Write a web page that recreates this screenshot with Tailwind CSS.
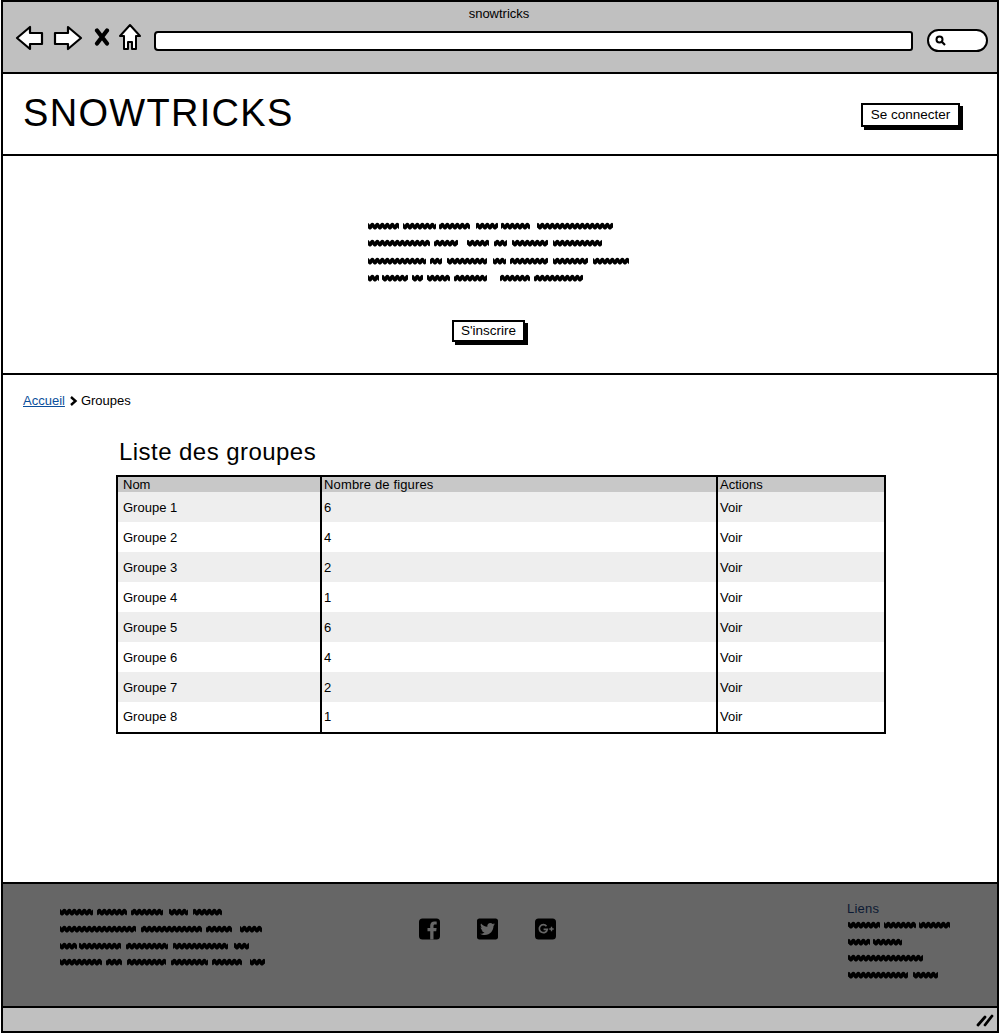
<!doctype html>
<html lang="fr">
<head>
<meta charset="utf-8">
<title>snowtricks</title>
<script src="https://cdn.jsdelivr.net/npm/@tailwindcss/browser@4"></script>
</head>
<body class="bg-white font-['Liberation_Sans',Arial,sans-serif] text-black">
<svg width="0" height="0" class="absolute">
  <defs>
    <pattern id="sq" width="5" height="8" patternUnits="userSpaceOnUse">
      <path d="M-5 4.5 C-4 2 -3.5 2 -2.5 4 S-1 6.5 0 4.5 C1 2 1.5 2 2.5 4 S4 6.5 5 4.5 C6 2 6.5 2 7.5 4" fill="none" stroke="#000" stroke-width="3.5"/>
    </pattern>
  </defs>
</svg>
<div class="ml-px w-[998px] h-[1033px] border-2 border-black flex flex-col overflow-hidden">
  <!-- browser chrome -->
  <div class="h-[72px] shrink-0 bg-[#c0c0c0] border-b-2 border-black flex flex-col">
    <div class="text-center text-[13px] leading-4 pt-[4px] pr-[2px]">snowtricks</div>
    <div class="flex items-center pl-[12px] mt-[1px]">
      <svg width="29" height="28" viewBox="0 0 29 28" class="shrink-0"><path d="M2 14 L15 3 L15 9 L27 9 L27 20 L15 20 L15 25 Z" fill="#fff" stroke="#000" stroke-width="2.2" stroke-linejoin="round"/></svg>
      <svg width="30" height="28" viewBox="0 0 30 28" class="ml-[9px] shrink-0"><path d="M2 9 L15 9 L15 3 L28 14 L15 25 L15 20 L2 20 Z" fill="#fff" stroke="#000" stroke-width="2.2" stroke-linejoin="round"/></svg>
      <svg width="16" height="18" viewBox="0 0 16 18" class="ml-[11px] -mt-[2px] shrink-0"><path d="M3 2.5 L13 15.5 M13 2.5 L3 15.5" stroke="#000" stroke-width="4.2" stroke-linecap="round"/></svg>
      <svg width="24" height="28" viewBox="0 0 24 28" class="ml-[8px] -mt-[1px] shrink-0"><path d="M12 2 L22 13 L18 13 L18 26 L14 26 L14 19 L10 19 L10 26 L6 26 L6 13 L2 13 Z" fill="#fff" stroke="#000" stroke-width="2" stroke-linejoin="round"/></svg>
      <div class="ml-[12px] mt-[6px] w-[759px] h-[20px] bg-white border-2 border-black rounded-l-[4px] rounded-r-[3px] shrink-0"></div>
      <div class="ml-[14px] mt-[6px] w-[61px] h-[23px] bg-white border-2 border-black rounded-[12px] shrink-0 flex items-center pl-[6px]">
        <svg width="11" height="11" viewBox="0 0 11 11"><circle cx="4.5" cy="4.5" r="3" fill="none" stroke="#000" stroke-width="2"/><path d="M6.8 6.8 L10 10" stroke="#000" stroke-width="2.2"/></svg>
      </div>
    </div>
  </div>
  <!-- header -->
  <div class="h-[82px] shrink-0 border-b-2 border-black flex items-center justify-between pl-[20px] pr-[37px]">
    <div class="text-[38px] leading-none tracking-[1.3px] -mt-[2px]">SNOWTRICKS</div>
    <div class="mt-[2px] w-[99px] h-[24px] bg-white border-2 border-black shadow-[3px_3px_0_#000] flex items-center justify-center text-[13.5px]">Se connecter</div>
  </div>
  <!-- hero -->
  <div class="h-[219px] shrink-0 border-b-2 border-black flex flex-col items-start pl-[363px] pt-[63px]">
    <svg width="266" height="66" viewBox="0 0 266 66" class="blur-[0.3px]">
      <g fill="url(#sq)">
        <g transform="translate(0,3)"><rect x="2" width="31" height="8" rx="2"/><rect x="37" width="33" height="8" rx="2"/><rect x="73" width="31" height="8" rx="2"/><rect x="110" width="22" height="8" rx="2"/><rect x="135" width="29" height="8" rx="2"/><rect x="171" width="76" height="8" rx="2"/></g>
        <g transform="translate(0,20)"><rect x="2" width="62" height="8" rx="2"/><rect x="68" width="24" height="8" rx="2"/><rect x="101" width="22" height="8" rx="2"/><rect x="128" width="13" height="8" rx="2"/><rect x="146" width="36" height="8" rx="2"/><rect x="187" width="49" height="8" rx="2"/></g>
        <g transform="translate(0,38)"><rect x="2" width="58" height="8" rx="2"/><rect x="64" width="12" height="8" rx="2"/><rect x="81" width="40" height="8" rx="2"/><rect x="127" width="13" height="8" rx="2"/><rect x="144" width="38" height="8" rx="2"/><rect x="187" width="35" height="8" rx="2"/><rect x="227" width="36" height="8" rx="2"/></g>
        <g transform="translate(0,55)"><rect x="2" width="11" height="8" rx="2"/><rect x="16" width="26" height="8" rx="2"/><rect x="46" width="11" height="8" rx="2"/><rect x="61" width="23" height="8" rx="2"/><rect x="88" width="33" height="8" rx="2"/><rect x="134" width="30" height="8" rx="2"/><rect x="168" width="49" height="8" rx="2"/></g>
      </g>
    </svg>
    <div class="ml-[86px] mt-[35px] w-[73px] h-[22px] bg-white border-2 border-black shadow-[3px_3px_0_#000] flex items-center justify-center text-[13.5px]">S'inscrire</div>
  </div>
  <!-- main -->
  <div class="h-[509px] shrink-0 flex flex-col pl-[20px]">
    <div class="flex items-center h-4 mt-[18px] text-[13px]">
      <span class="text-[#0b4f9c] underline">Accueil</span>
      <svg width="9" height="10" viewBox="0 0 9 10" class="ml-[4px] mr-[3px]"><path d="M2 1 L6.5 5 L2 9" fill="none" stroke="#000" stroke-width="2.4"/></svg>
      <span>Groupes</span>
    </div>
    <h1 class="ml-[96px] mt-[29px] text-[24px] leading-7 tracking-[0.45px]">Liste des groupes</h1>
    <table class="ml-[93px] mt-[9px] w-[770px] table-fixed border-collapse border-2 border-black text-[13px] leading-4">
      <colgroup><col class="w-[204px]"><col class="w-[396px]"><col></colgroup>
      <thead>
        <tr class="h-[16px] bg-[#c8c8c8] text-[13px] leading-[14px]">
          <th class="font-normal text-left pl-[5px] pt-[1px] border-r-2 border-black">Nom</th>
          <th class="font-normal text-left pl-[2px] pt-[1px] tracking-[0.15px] border-r-2 border-black">Nombre de figures</th>
          <th class="font-normal text-left pl-[2px] pt-[1px]">Actions</th>
        </tr>
      </thead>
      <tbody>
        <tr class="h-[30px] bg-[#eeeeee]"><td class="pl-[5px] pt-[2px] border-r-2 border-black">Groupe 1</td><td class="pl-[2px] pt-[2px] border-r-2 border-black">6</td><td class="pl-[2px] pt-[2px]">Voir</td></tr>
        <tr class="h-[30px] bg-white"><td class="pl-[5px] pt-[2px] border-r-2 border-black">Groupe 2</td><td class="pl-[2px] pt-[2px] border-r-2 border-black">4</td><td class="pl-[2px] pt-[2px]">Voir</td></tr>
        <tr class="h-[30px] bg-[#eeeeee]"><td class="pl-[5px] pt-[2px] border-r-2 border-black">Groupe 3</td><td class="pl-[2px] pt-[2px] border-r-2 border-black">2</td><td class="pl-[2px] pt-[2px]">Voir</td></tr>
        <tr class="h-[30px] bg-white"><td class="pl-[5px] pt-[2px] border-r-2 border-black">Groupe 4</td><td class="pl-[2px] pt-[2px] border-r-2 border-black">1</td><td class="pl-[2px] pt-[2px]">Voir</td></tr>
        <tr class="h-[30px] bg-[#eeeeee]"><td class="pl-[5px] pt-[2px] border-r-2 border-black">Groupe 5</td><td class="pl-[2px] pt-[2px] border-r-2 border-black">6</td><td class="pl-[2px] pt-[2px]">Voir</td></tr>
        <tr class="h-[30px] bg-white"><td class="pl-[5px] pt-[2px] border-r-2 border-black">Groupe 6</td><td class="pl-[2px] pt-[2px] border-r-2 border-black">4</td><td class="pl-[2px] pt-[2px]">Voir</td></tr>
        <tr class="h-[30px] bg-[#eeeeee]"><td class="pl-[5px] pt-[2px] border-r-2 border-black">Groupe 7</td><td class="pl-[2px] pt-[2px] border-r-2 border-black">2</td><td class="pl-[2px] pt-[2px]">Voir</td></tr>
        <tr class="h-[31px] bg-white"><td class="pl-[5px] border-r-2 border-black">Groupe 8</td><td class="pl-[2px] border-r-2 border-black">1</td><td class="pl-[2px]">Voir</td></tr>
      </tbody>
    </table>
  </div>
  <!-- footer -->
  <div class="h-[126px] shrink-0 bg-[#666666] border-t-2 border-b-2 border-black flex items-start -mt-[2px]">
    <svg width="210" height="62" viewBox="0 0 210 62" class="ml-[55px] mt-[23px] shrink-0 blur-[0.4px]">
      <g fill="url(#sq)">
        <g transform="translate(0,1)"><rect x="2" width="33" height="8" rx="2"/><rect x="39" width="30" height="8" rx="2"/><rect x="73" width="32" height="8" rx="2"/><rect x="111" width="19" height="8" rx="2"/><rect x="135" width="29" height="8" rx="2"/></g>
        <g transform="translate(0,18)"><rect x="2" width="76" height="8" rx="2"/><rect x="83" width="61" height="8" rx="2"/><rect x="148" width="26" height="8" rx="2"/><rect x="182" width="22" height="8" rx="2"/></g>
        <g transform="translate(0,35)"><rect x="2" width="17" height="8" rx="2"/><rect x="21" width="42" height="8" rx="2"/><rect x="68" width="42" height="8" rx="2"/><rect x="115" width="55" height="8" rx="2"/><rect x="176" width="15" height="8" rx="2"/></g>
        <g transform="translate(0,51)"><rect x="2" width="42" height="8" rx="2"/><rect x="48" width="16" height="8" rx="2"/><rect x="69" width="39" height="8" rx="2"/><rect x="113" width="37" height="8" rx="2"/><rect x="154" width="30" height="8" rx="2"/><rect x="192" width="15" height="8" rx="2"/></g>
      </g>
    </svg>
    <div class="ml-[151px] mt-[33px] flex gap-[37px] shrink-0">
      <svg width="21" height="24" viewBox="0 0 21 24"><rect x="0" y="1.5" width="21" height="21" rx="3.5" fill="#000"/><path d="M14.5 22.5 V14.3 h2.7 l.4-3.2 h-3.1 V9.1 c0-.9.3-1.5 1.6-1.5 h1.6 V4.7 c-.3 0-1.3-.1-2.4-.1 -2.4 0-4.1 1.5-4.1 4.2 V11.1 H8.5 v3.2 h2.7 v8.2 z" fill="#666"/></svg>
      <svg width="21" height="24" viewBox="0 0 448 512"><path d="M400 32H48C21.5 32 0 53.5 0 80v352c0 26.5 21.5 48 48 48h352c26.5 0 48-21.5 48-48V80c0-26.5-21.5-48-48-48zm-48.9 158.8c.2 2.8.2 5.7.2 8.5 0 86.7-66 186.6-186.6 186.6-37.2 0-71.7-10.8-100.7-29.4 5.3.6 10.4.8 15.8.8 30.7 0 58.9-10.4 81.4-28-28.8-.6-53-19.5-61.3-45.5 10.1 1.5 19.2 1.5 29.6-1.2-30-6.1-52.5-32.5-52.5-64.4v-.8c8.7 4.9 18.9 7.9 29.6 8.3a65.447 65.447 0 0 1-29.2-54.6c0-12.2 3.2-23.4 8.9-33.1 32.3 39.8 80.8 65.8 135.2 68.6-9.3-44.5 24-80.6 64-80.6 18.9 0 35.9 7.9 47.9 20.7 14.8-2.8 29-8.3 41.6-15.8-4.9 15.2-15.1 28-28.8 35.9 13.2-1.4 26-5.1 37.9-10.2-9 13.2-20.2 24.9-33 34.2z"/></svg>
      <svg width="21" height="24" viewBox="0 0 21 24"><rect x="0" y="1.5" width="21" height="21" rx="3.5" fill="#000"/><path d="M11.5 9.2 A4 4 0 1 0 12.3 12.3 L8.6 12.3" fill="none" stroke="#666" stroke-width="1.7"/><path d="M14.3 12 H18.7 M16.5 9.8 V14.2" stroke="#666" stroke-width="1.4"/></svg>
    </div>
    <div class="ml-[291px] mt-[17px] shrink-0">
      <div class="text-[13px] leading-4 text-[#0c1a33] tracking-[0.2px]">Liens</div>
      <svg width="106" height="60" viewBox="0 0 106 60" class="block mt-[3px] blur-[0.3px]">
        <g fill="url(#sq)">
          <g transform="translate(0,1)"><rect x="1" width="32" height="8" rx="2"/><rect x="37" width="32" height="8" rx="2"/><rect x="72" width="31" height="8" rx="2"/></g>
          <g transform="translate(0,18)"><rect x="1" width="22" height="8" rx="2"/><rect x="26" width="29" height="8" rx="2"/></g>
          <g transform="translate(0,34)"><rect x="1" width="75" height="8" rx="2"/></g>
          <g transform="translate(0,51)"><rect x="1" width="60" height="8" rx="2"/><rect x="66" width="25" height="8" rx="2"/></g>
        </g>
      </svg>
    </div>
  </div>
  <!-- status bar -->
  <div class="flex-1 bg-[#c0c0c0] flex items-center justify-end pr-[3px]">
    <svg width="18" height="14" viewBox="0 0 18 14"><path d="M2 12 L9 4 M9 12 L16 3" stroke="#000" stroke-width="2.8" stroke-linecap="round"/></svg>
  </div>
</div>
</body>
</html>
